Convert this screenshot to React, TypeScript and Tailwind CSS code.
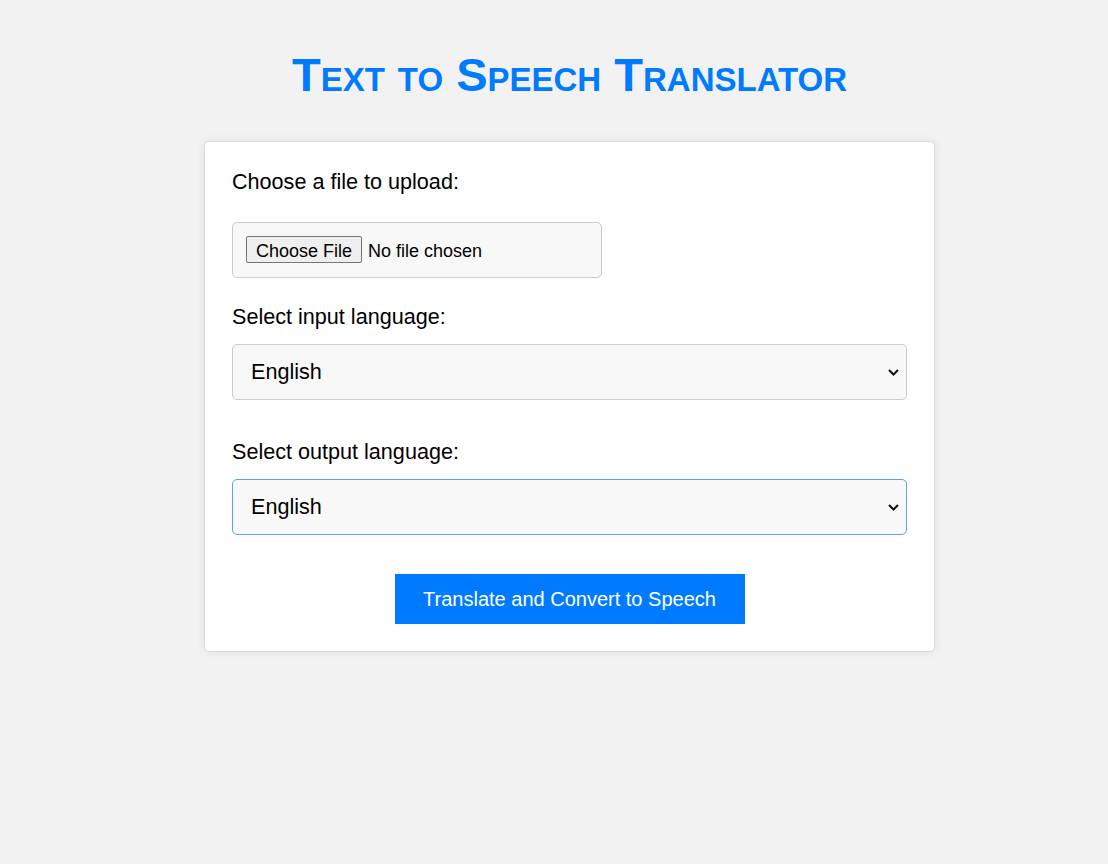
import { useState } from 'react';

const languages = ['English', 'Spanish', 'French', 'German', 'Hindi', 'Chinese', 'Japanese'];

function LanguageSelect({ value, onChange, focused }: { value: string; onChange: (v: string) => void; focused?: boolean }) {
    return (
        <div className="relative mt-[15px]">
            <select
                value={value}
                onChange={(e) => onChange(e.target.value)}
                className={`block h-[56px] w-full appearance-none rounded-[5px] border bg-[#f8f8f8] pl-[18px] pr-[30px] text-[21.6px] outline-none ${
                    focused ? 'border-[#5ea1f0]' : 'border-[#cccccc]'
                }`}
            >
                {languages.map((l) => (
                    <option key={l}>{l}</option>
                ))}
            </select>
            <svg
                className="pointer-events-none absolute right-[8px] top-[25px]"
                width="11"
                height="7"
                viewBox="0 0 11 7"
                fill="none"
            >
                <path d="M1 1l4.5 4.5L10 1" stroke="#111" strokeWidth="2" />
            </svg>
        </div>
    );
}

export default function App() {
    const [inputLang, setInputLang] = useState('English');
    const [outputLang, setOutputLang] = useState('English');

    return (
        <div className="min-h-[864px] bg-[#f2f2f2] pl-[31px] pt-[48px] font-['Liberation_Sans',Arial,sans-serif] text-black">
            <h1 className="text-center text-[47px] leading-[54px] font-bold text-[#007bff] [font-variant:small-caps]">
                Text to Speech Translator
            </h1>

            <div className="mx-auto mt-[39px] w-[731px] rounded-[5px] border border-[#dcdcdc] bg-white p-[27px] shadow-[0_0_10px_rgba(0,0,0,0.08)]">
                <label className="block text-[21.6px] leading-[25px]">Choose a file to upload:</label>
                <input
                    type="file"
                    className="mt-[28px] block h-[56px] w-[370px] rounded-[5px] border border-[#cccccc] bg-[#f8f8f8] px-[13px] py-[13px] text-[18px] leading-[28px] file:mr-[6px] file:h-[27px] file:rounded-[2px] file:border file:border-[#767676] file:bg-[#efefef] file:px-[9px] file:text-black"
                />

                <label className="mt-[26px] block text-[21.6px] leading-[25px]">Select input language:</label>
                <LanguageSelect value={inputLang} onChange={setInputLang} />

                <label className="mt-[39px] block text-[21.6px] leading-[25px]">Select output language:</label>
                <LanguageSelect value={outputLang} onChange={setOutputLang} focused />

                <div className="mt-[39px] flex justify-center">
                    <button className="h-[50px] w-[350px] bg-[#007bff] text-[20px] text-white">
                        Translate and Convert to Speech
                    </button>
                </div>
            </div>
        </div>
    );
}
